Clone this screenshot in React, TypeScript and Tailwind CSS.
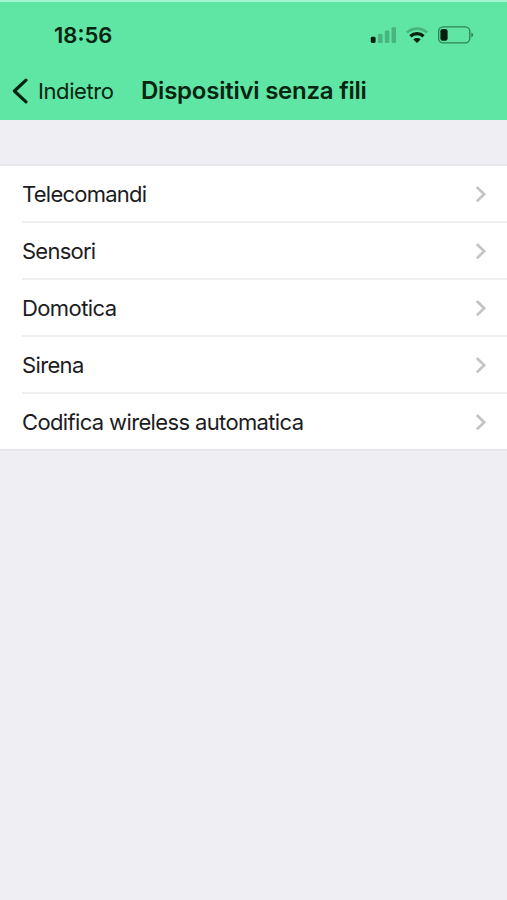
const items = [
  { label: "Telecomandi", tracking: "tracking-[-0.75px]" },
  { label: "Sensori", tracking: "tracking-[-0.75px]" },
  { label: "Domotica", tracking: "tracking-[-0.6px]" },
  { label: "Sirena", tracking: "tracking-[-0.65px]" },
  { label: "Codifica wireless automatica", tracking: "tracking-[-0.64px]" },
];

function StatusIcons() {
  return (
    <div className="flex items-center text-[#04200c]">
      {/* Signal */}
      <svg width="26" height="18" viewBox="0 0 26 18" fill="currentColor">
        <rect x="0.8" y="10.8" width="4.8" height="6.2" rx="1.4" />
        <rect x="8" y="8" width="4.6" height="9" rx="1.2" opacity="0.25" />
        <rect x="14.8" y="4.6" width="4.6" height="12.4" rx="1.2" opacity="0.25" />
        <rect x="21.6" y="1.2" width="4.4" height="15.8" rx="1.2" opacity="0.25" />
      </svg>
      {/* Wi-Fi */}
      <svg className="ml-2.5" width="22" height="18" viewBox="0 0 22 18" fill="none" stroke="currentColor">
        <path d="M1 6.6C6.6 1.3 15.4 1.3 21 6.6" strokeWidth="2.8" opacity="0.25" />
        <path d="M4.4 10.2C8.2 6.7 13.8 6.7 17.6 10.2" strokeWidth="3.2" />
        <path d="M11 17 7.4 13.4C9.4 11.6 12.6 11.6 14.6 13.4Z" fill="currentColor" stroke="none" />
      </svg>
      {/* Battery */}
      <svg className="ml-2.5" width="36" height="18" viewBox="0 0 36 18">
        <rect x="0.6" y="0.9" width="31.2" height="16" rx="4.6" fill="none" stroke="currentColor" strokeWidth="1.4" opacity="0.5" />
        <rect x="2.4" y="3" width="7.2" height="11.8" rx="2.2" fill="currentColor" />
        <path d="M33.4 6.5C35.6 7.2 35.6 10.6 33.4 11.3Z" fill="currentColor" opacity="0.55" />
      </svg>
    </div>
  );
}

export default function App() {
  return (
    <div className="flex h-[900px] w-[507px] flex-col overflow-hidden bg-[#eeeef3] font-['Inter','Liberation_Sans',sans-serif]">
      <header className="h-[120px] border-t-2 border-[#a5f3cf] bg-[#5fe6a5] text-[#06240f]">
        <div className="flex h-[66px] items-center justify-between pl-[54px] pr-[33px]">
          <span className="text-[22px] leading-none font-semibold">18:56</span>
          <StatusIcons />
        </div>
        <nav className="flex h-[46px] items-center pl-3">
          <svg width="16" height="26" viewBox="0 0 16 26" fill="none" stroke="currentColor" strokeWidth="3.2">
            <path d="M14 2.2 2.4 13 14 23.8" strokeLinecap="round" strokeLinejoin="round" />
          </svg>
          <span className="ml-2.5 w-[103px] text-[22px] leading-none tracking-[-0.4px] whitespace-nowrap">Indietro</span>
          <h1 className="text-[24px] leading-none font-semibold tracking-[-0.24px] whitespace-nowrap">Dispositivi senza fili</h1>
        </nav>
      </header>

      <ul className="mt-[44px] border-y-2 border-[#e7e7eb] bg-white">
        {items.map((item, i) => (
          <li key={item.label} className="pl-[22px]">
            <div className={`flex items-center justify-between pr-[20px] ${i < items.length - 1 ? "h-[57px] border-b-2 border-[#efeff0]" : "h-[55px]"}`}>
              <span className={`pt-px text-[22px] leading-none text-[#1c1c1e] ${item.tracking}`}>{item.label}</span>
              <svg width="12" height="18" viewBox="0 0 12 18" fill="none" stroke="#c4c4c6" strokeWidth="2.7">
                <path d="M1.8 2 9.2 9.2 1.8 16.4" />
              </svg>
            </div>
          </li>
        ))}
      </ul>
    </div>
  );
}
